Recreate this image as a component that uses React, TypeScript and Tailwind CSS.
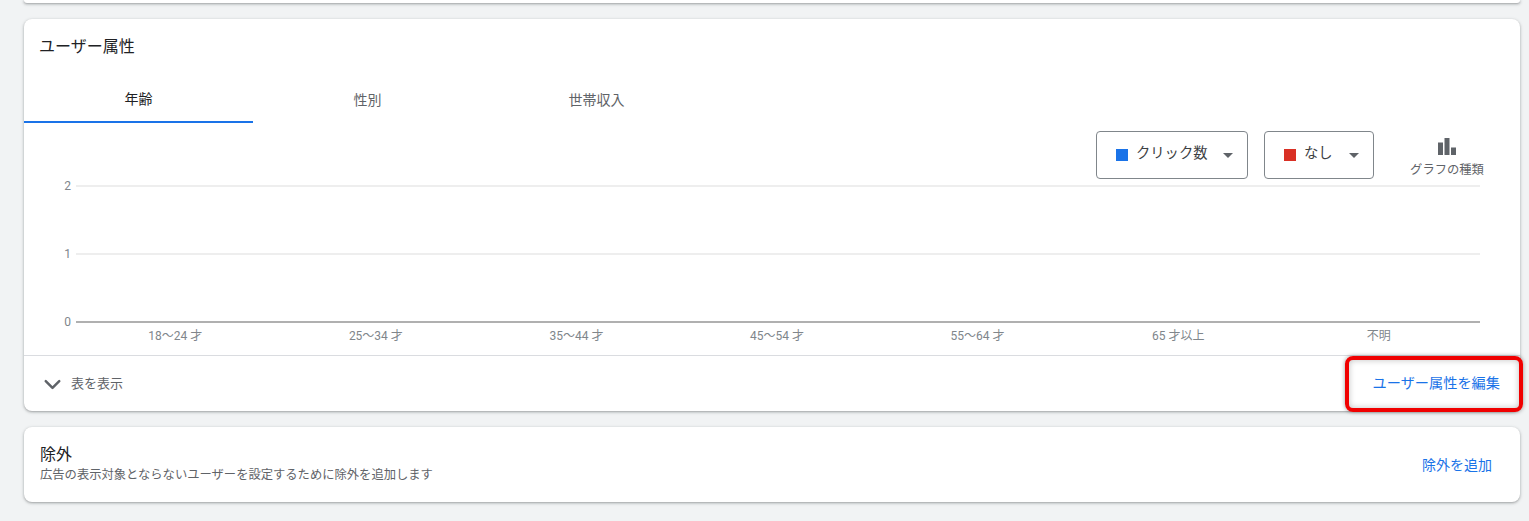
import { ChevronDown } from 'lucide-react'

const FONT = "font-['Roboto','Noto_Sans_CJK_JP',sans-serif]"
const ages = ['18〜24 才', '25〜34 才', '35〜44 才', '45〜54 才', '55〜64 才', '65 才以上', '不明']
const cardShadow = 'shadow-[0_1px_2px_rgba(60,64,67,0.3),0_1px_3px_1px_rgba(60,64,67,0.15)]'

function Metric({ label, color, width }: { label: string; color: string; width: string }) {
  return (
    <div className={`${width} h-12 flex items-center pl-[19px] border border-[#80868b] rounded`}>
      <span className={`w-3 h-3 ${color}`} />
      <span className="ml-2 pb-[3px] text-[14.3px] text-[#3c4043] leading-none">{label}</span>
      <span className="ml-auto mr-[14px] w-0 h-0 border-x-[5px] border-x-transparent border-t-[5px] border-t-[#5f6368]" />
    </div>
  )
}

function GridRow({ value, dark }: { value: number; dark?: boolean }) {
  return (
    <div className="flex items-center h-[2px]">
      <span className="w-[52px] pr-[5px] text-right text-xs text-[#80868b]">{value}</span>
      <div className={`w-[1404px] h-[2px] ${dark ? 'bg-[#b0b0b0]' : 'bg-[#eeeeee]'}`} />
    </div>
  )
}

export default function App() {
  return (
    <div className={`${FONT} w-[1529px] h-[521px] overflow-hidden bg-[#f1f3f4] pl-6 pr-[9px]`}>
      <div className={`h-[3px] bg-white rounded-b-lg ${cardShadow}`} />

      {/* ユーザー属性 */}
      <div className={`relative mt-4 h-[392px] bg-white rounded-lg ${cardShadow}`}>
        <h2 className="pt-[18px] pl-[15px] text-base leading-5 font-normal text-[#202124]">ユーザー属性</h2>

        <div className="flex mt-[18px] h-[48px] text-sm">
          <div className="w-[229px] flex items-center justify-center pt-px border-b-2 border-[#1a73e8] text-[#202124]">年齢</div>
          <div className="w-[229px] flex items-center justify-center pt-px text-[#5f6368]">性別</div>
          <div className="w-[229px] flex items-center justify-center pt-px text-[#5f6368]">世帯収入</div>
        </div>

        <div className="flex justify-end items-start mt-2 pr-[36px]">
          <Metric label="クリック数" color="bg-[#1a73e8]" width="w-[152px]" />
          <div className="ml-4"><Metric label="なし" color="bg-[#d93025]" width="w-[110px]" /></div>
          <div className="ml-[36px] w-[74px] flex flex-col items-center">
            <svg width="18" height="17" viewBox="0 0 18 17" className="mt-[7px]" fill="#5f6368">
              <path d="M0 4.5h5V17H0zM6.5 0h5v17h-5zM13 9.5h5V17h-5z" />
            </svg>
            <span className="mt-[7px] text-[12.3px] leading-4 text-[#5f6368] whitespace-nowrap">グラフの種類</span>
          </div>
        </div>

        <div className="mt-[6px] flex flex-col gap-[66px]">
          <GridRow value={2} />
          <GridRow value={1} />
          <GridRow value={0} dark />
        </div>

        <div className="flex ml-[51px] w-[1404px] mt-[3px] h-[20px] items-center">
          {ages.map(a => (
            <span key={a} className="flex-1 text-center text-xs text-[#80868b]">{a}</span>
          ))}
        </div>

        <div className="mt-[9px] h-[57px] flex items-center justify-between border-t border-[#dadce0] pl-[15px] pr-5">
          <div className="flex items-center">
            <ChevronDown className="w-[27px] h-[27px] text-[#5f6368]" strokeWidth={2.2} />
            <span className="ml-[5px] text-[13px] text-[#5f6368]">表を表示</span>
          </div>
          <span className="text-[14.2px] text-[#1a73e8]">ユーザー属性を編集</span>
        </div>

        {/* 赤枠の注釈 */}
        <div className="absolute left-[1321px] top-[337px] w-[178px] h-[56px] border-4 border-[#f00000] rounded-lg shadow-[0_0_4px_rgba(0,0,0,0.4),inset_0_0_6px_rgba(0,0,0,0.25)]" />
      </div>

      {/* 除外 */}
      <div className={`mt-4 h-[75px] bg-white rounded-lg flex items-center justify-between pl-4 pr-7 ${cardShadow}`}>
        <div>
          <div className="text-base leading-5 -mt-[1px] mb-[2px] text-[#202124]">除外</div>
          <div className="text-[12.3px] leading-4 text-[#5f6368]">広告の表示対象とならないユーザーを設定するために除外を追加します</div>
        </div>
        <span className="text-sm text-[#1a73e8]">除外を追加</span>
      </div>
    </div>
  )
}
